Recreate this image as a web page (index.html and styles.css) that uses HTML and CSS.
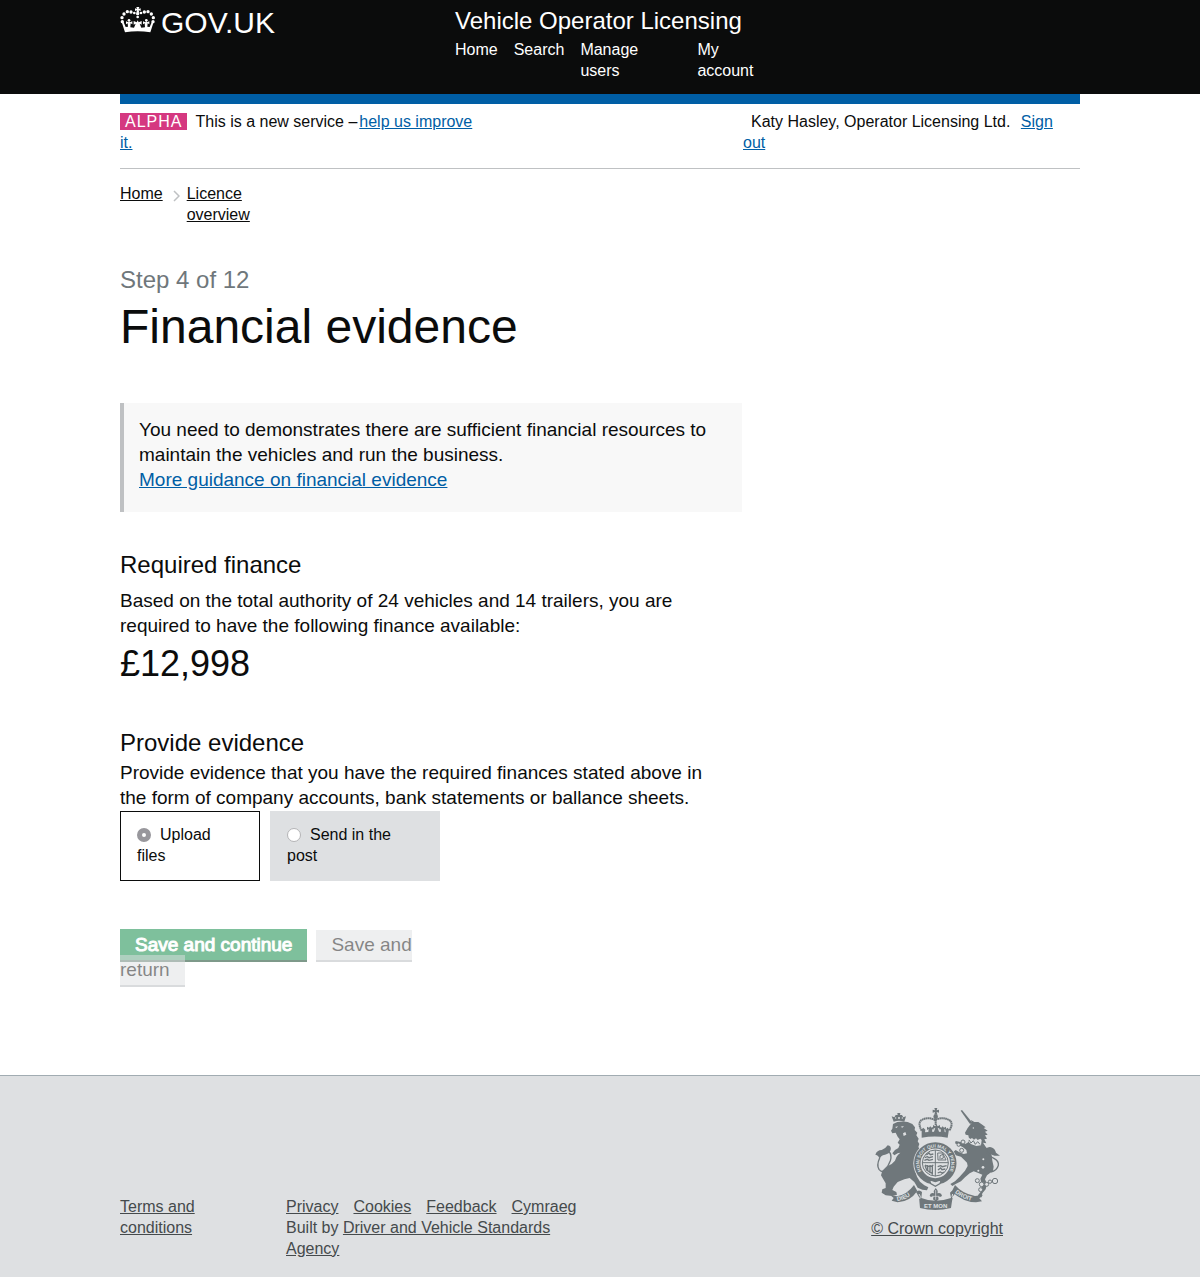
FILE: index.html
```html
<!DOCTYPE html>
<html lang="en">
<head>
<meta charset="utf-8">
<meta name="viewport" content="width=device-width, initial-scale=1">
<title>Financial evidence - Vehicle Operator Licensing</title>
<link rel="stylesheet" href="styles.css">
</head>
<body>
<header class="header">
  <div class="container header-inner">
    <a class="logo" href="#">
      <svg class="logo-crown" viewBox="30 21 105 84" aria-hidden="true">
        <g fill="#fff">
          <path d="M79 24h9l-2 6 6-2v8l-6-2 2 7h-9l2-7-6 2v-8l6 2z"/>
          <circle cx="83" cy="44" r="5"/><circle cx="83" cy="54" r="4"/>
          <circle cx="73" cy="42" r="4"/><circle cx="93" cy="42" r="4"/>
          <circle cx="63" cy="39" r="5"/><circle cx="103" cy="39" r="5"/>
          <circle cx="52" cy="38" r="5"/><circle cx="114" cy="38" r="5"/>
          <circle cx="42" cy="45" r="5"/><circle cx="124" cy="45" r="5"/>
          <circle cx="36" cy="56" r="5"/><circle cx="130" cy="56" r="5"/>
          <circle cx="37" cy="68" r="5"/><circle cx="129" cy="68" r="5"/>
          <circle cx="57" cy="64" r="4"/><circle cx="109" cy="64" r="4"/>
          <path d="M36 72l5-2 6 14 7-1-1-10-5 3v-9l7 3 2-4 3 4 7-3v9l-5-3-1 12 11 1 5-12-6 3v-11l9 4 3-6 3 6 9-4v11l-6-3 5 12 11-1-1-12-5 3v-9l7 3 3-4 2 4 7-3v9l-5-3-1 10 7 1 6-14 5 2-9 28q-38-6-76 0z"/>
        </g>
      </svg>
      <span>GOV.UK</span>
    </a>
    <div class="header-service">
      <a class="service-name" href="#">Vehicle Operator Licensing</a>
      <nav aria-label="Main">
        <ul class="nav">
          <li><a href="#">Home</a></li>
          <li><a href="#">Search</a></li>
          <li class="nav-wide"><a href="#">Manage<br>users</a></li>
          <li><a href="#">My<br>account</a></li>
        </ul>
      </nav>
    </div>
  </div>
</header>

<div class="container">
  <div class="phase-banner">
    <p class="phase-message"><strong class="phase-tag">ALPHA</strong>This is a new service –<a class="phase-link" href="#">help us improve it.</a></p>
    <p class="account"><span class="account-name">Katy Hasley, Operator Licensing Ltd.</span> <a href="#">Sign out</a></p>
  </div>

  <nav aria-label="Breadcrumb">
    <ol class="breadcrumb">
      <li><a href="#">Home</a></li>
      <li>
        <svg class="chevron" viewBox="0 0 7 12" aria-hidden="true"><path d="M1 1l5 5-5 5" fill="none" stroke="#bfc1c3" stroke-width="1.5"/></svg>
        <a href="#">Licence overview</a>
      </li>
    </ol>
  </nav>

  <main class="main">
    <p class="step">Step 4 of 12</p>
    <h1 class="title">Financial evidence</h1>

    <div class="panel">
      <p>You need to demonstrates there are sufficient financial resources to maintain the vehicles and run the business.</p>
      <a href="#">More guidance on financial evidence</a>
    </div>

    <form>
      <section class="section">
        <h2 class="section-title section-title-spaced">Required finance</h2>
        <p class="text">Based on the total authority of 24 vehicles and 14 trailers, you are required to have the following finance available:</p>
        <p class="amount">£12,998</p>
      </section>

      <section class="section">
        <h2 class="section-title">Provide evidence</h2>
        <p class="text">Provide evidence that you have the required finances stated above in the form of company accounts, bank statements or ballance sheets.</p>
        <div class="choices">
          <label class="choice choice-upload"><input type="radio" name="evidence" checked>Upload files</label>
          <label class="choice choice-post"><input type="radio" name="evidence">Send in the post</label>
        </div>
      </section>

      <div class="actions"><button class="button button-primary" type="submit">Save and continue</button><a class="button button-secondary" href="#">Save and return</a></div>
    </form>
  </main>
</div>

<footer class="footer">
  <div class="container footer-inner">
    <div class="footer-terms"><a href="#">Terms and conditions</a></div>
    <div class="footer-meta">
      <ul class="footer-links">
        <li><a href="#">Privacy</a></li>
        <li><a href="#">Cookies</a></li>
        <li><a href="#">Feedback</a></li>
        <li><a href="#">Cymraeg</a></li>
      </ul>
      <p>Built by <a href="#">Driver and Vehicle Standards Agency</a></p>
    </div>
    <a class="copyright" href="#">
      <svg class="crest" viewBox="30 21 375 309" aria-hidden="true">
        <defs>
          <path id="garter" d="M180 227A48 48 0 1 1 242 227"/>
          <path id="dieu" d="M97 303Q130 299 153 270"/>
          <path id="droit" d="M263 273Q297 303 333 303"/>
        </defs>
        <g fill="#6f777b">
          <!-- lion -->
          <path d="M86 65l-6-16 8 3 4-7h6l-1-6h9l-1 6h6l4 7 8-3-5 16q-16-5-32 0z"/>
          <path d="M84 72Q100 62 128 66L142 72 150 82 149 90 157 98 154 106 161 116 158 124 163 132 160 141 166 150 172 165Q158 175 152 190 148 210 156 230L165 245 178 256 190 262 186 271 172 269 158 263 148 246 134 234 118 238 98 246 86 260 82 270 94 276 96 284 82 288 62 286 50 278 52 268 62 264 62 250 54 236 48 226 52 212 64 200 80 192 90 182 94 172Q98 164 106 158L98 160 88 166 82 160 90 150 100 144 104 134 98 128 104 118 98 110 92 98 82 100 78 92 82 86z"/>
          <path d="M31 164Q36 150 50 150 60 148 68 136 80 138 77 150 73 162 60 164 46 166 44 178 42 166 31 164z"/>
          <!-- unicorn -->
          <path d="M287 32l4-2 31 38-7 4z"/>
          <path d="M302 104L300 98 308 84 320 68 318 60 328 66 340 66 352 74 362 82 356 84 368 92 360 95 368 104 360 106 366 116 358 118 364 130 354 128 362 140 372 152 380 166 382 182 386 200 384 212 374 220 366 226 360 238 366 252 362 268 352 280 350 292 338 292 340 284 350 272 350 252 346 236 352 224 338 218 326 214 314 220 300 232 288 244 272 252 262 258 256 252 270 244 284 230 300 212 308 198 306 188 298 180 288 170 272 166 262 158 272 150 282 156 296 162 306 160 304 150 294 142 282 136 270 130 272 123 286 126 300 132 308 128 312 116 310 106z"/>
          <path d="M362 148Q370 138 382 143 390 146 393 158L405 167Q392 169 380 164 366 160 362 148z"/>
          <!-- crown -->
          <path d="M208 24h9l-2 7 7-2v9l-7-2 2 8h-9l2-8-7 2v-9l7 2z"/>
          <circle cx="212" cy="50" r="7"/>
          <path d="M170 88l5-5 6 6-1 8 10-1 1-9-5 3v-10l6 3 4-4 4 4 5-3v10l-4-3 1 9 5-1 4-12-7 4v-12l7 4 3-7 4 7 7-4v12l-7-4 4 12 5 1 1-9-4 3v-10l5 3 4-4 4 4 6-3v10l-5-3 1 9 3 1-1-8 6-6 5 5-4 25q-39-7-78 0z"/>
        </g>
        <g fill="none" stroke="#6f777b">
          <path d="M170 92Q156 66 172 59 190 50 210 60 232 50 250 59 268 66 253 92" stroke-width="6" stroke-dasharray="5 1"/>
          <path d="M212 58v18" stroke-width="6" stroke-dasharray="5 1"/>
          <path d="M44 174Q34 196 42 208 52 220 62 210 70 196 76 182 82 164 70 152" stroke-width="4"/>
          <path d="M377 216Q396 212 400 196 402 184 388 176 372 168 366 156 364 150 368 146" stroke-width="4"/>
          <g stroke-width="3" fill="#dee0e2">
            <circle cx="337" cy="242" r="6"/><circle cx="350" cy="253" r="7"/><circle cx="365" cy="253" r="6"/><circle cx="375" cy="245" r="5"/><circle cx="390" cy="243" r="8"/><circle cx="347" cy="269" r="6"/>
            <circle cx="294" cy="126" r="6"/><circle cx="281" cy="134" r="5"/><circle cx="290" cy="151" r="6"/>
          </g>
        </g>
        <g fill="#dee0e2">
          <circle cx="102" cy="54" r="3"/><circle cx="112" cy="54" r="2"/><circle cx="92" cy="54" r="2"/>
          <path d="M90 81l9-2-4 5zM107 80l10-2-5 5zM114 100l7-4 3 8-8 4z"/>
          <circle cx="354" cy="202" r="4"/><circle cx="340" cy="212" r="3"/><circle cx="355" cy="178" r="3"/><circle cx="325" cy="84" r="2"/>
          <path d="M310 112l6 5 5-3 6 5 6-4 5 5 8-4 4 4-2 16-14 2-15-5-9-8z"/>
        </g>
        <path d="M312 120l6 9 7-7 6 11 7-8 7 8" fill="none" stroke="#6f777b" stroke-width="3"/>
        <!-- garter and shield -->
        <circle cx="211" cy="190" r="66" fill="#dee0e2"/>
        <circle cx="211" cy="190" r="54" fill="none" stroke="#6f777b" stroke-width="19"/>
        <text class="crest-garter" text-anchor="middle"><textPath href="#garter" startOffset="50%">HONI SOIT QUI MAL Y PENSE</textPath></text>
        <circle cx="211" cy="189" r="39" fill="#dee0e2" stroke="#6f777b" stroke-width="3"/>
        <g fill="none" stroke="#6f777b" stroke-width="4">
          <path d="M211 150v79M172 188h78" stroke-width="3"/>
          <path d="M184 165l8-6 4 5 9-2M179 173l8-3 5 3 12-3M178 181l9-3 5 3 12-3M219 210l8-6 4 5 10-2M218 200l9-3 5 3 13-3M218 219l8-3 5 3 7-3"/>
          <path d="M218 159h15l10 21h-24zM225 178v-11l9-4 1 11-7 3" stroke-width="3"/>
          <path d="M180 196l5 14 18 11M188 195v22M195 195v25M202 195v29M180 195q15 8 25 0"/>
        </g>
        <path d="M193 239l18 6 18-6-4 12-14 8-14-8z" fill="#dee0e2" stroke="#6f777b" stroke-width="4"/>
        <!-- motto ribbon -->
        <g fill="#6f777b">
          <path d="M76 286l20 3q30-5 51-34l10 18q-22 32-59 34l-18-5 6-8z"/>
          <path d="M270 255q22 26 60 33l24-3-11 10 8 9-18 3q-38-1-73-32z"/>
          <path d="M153 276q9-9 18 0l-2 18q41 17 89 0l-3-16q10-12 19-2l-10 13q-3 12-6 35-48 12-93 0l-3-33z"/>
          <path d="M212 264q9 9 5 16 12-4 14 7-5 6-12 2l2 9-8 7-9-7 2-9q-8 4-12-2 2-11 13-7-3-8 5-16z"/>
        </g>
        <path d="M212 270v29M201 289h22" stroke="#dee0e2" stroke-width="2"/>
        <path d="M162 282q7 7 2 15M263 282q-4 8 1 12" fill="none" stroke="#dee0e2" stroke-width="3"/>
        <text class="crest-motto"><textPath href="#dieu">DIEU</textPath></text>
        <text class="crest-motto"><textPath href="#droit" startOffset="8">DROIT</textPath></text>
        <text class="crest-motto" x="212" y="323" text-anchor="middle">ET MON</text>
      </svg>
      <span>© Crown copyright</span>
    </a>
  </div>
</footer>
</body>
</html>
```
FILE: styles.css
```css
* { box-sizing: border-box; }

body {
  margin: 0;
  background: #fff;
  color: #0b0c0c;
  font: 16px/21px "Liberation Sans", Arial, sans-serif;
}

h1, h2, p, ul, ol { margin: 0; padding: 0; font-weight: 400; }
ul, ol { list-style: none; }
a { color: #005ea5; }

.container {
  max-width: 960px;
  margin: 0 auto;
}

/* Header */
.header { background: #0b0c0c; }
.header-inner {
  display: grid;
  grid-template-columns: 335px 1fr;
  padding: 6px 0 13px;
}
.header a { color: #fff; text-decoration: none; }
.logo {
  display: flex;
  gap: 6px;
  align-items: flex-start;
  height: 34px;
  font-size: 30px;
  line-height: 34px;
}
.logo-crown { width: 35px; height: 28px; }
.service-name { display: block; font-size: 24px; line-height: 30px; }
.nav { display: flex; gap: 16px; padding-top: 3px; }
.nav-wide { width: 101px; }

/* Phase banner */
.phase-banner {
  display: flex;
  justify-content: space-between;
  border-top: 10px solid #005ea5;
  border-bottom: 1px solid #bfc1c3;
  padding: 7px 0 15px;
}
.phase-message { width: 360px; }
.phase-tag {
  display: inline-block;
  margin-right: 8px;
  padding: 0 5px;
  background: #d53880;
  color: #fff;
  font-weight: 400;
  letter-spacing: 1px;
  line-height: 17px;
}
.phase-link { margin-left: 2px; }
.account { width: 337px; padding-right: 20px; text-indent: 8px; }
.account-name { margin-right: 6px; }

/* Breadcrumb */
.breadcrumb { display: flex; gap: 10px; padding-top: 14px; }
.breadcrumb li { display: flex; gap: 7px; width: min-content; }
.breadcrumb a { color: #0b0c0c; }
.chevron { flex: none; width: 7px; height: 12px; margin-top: 7px; }

/* Content */
.main {
  max-width: 622px;
  padding: 40px 0 93px;
  font-size: 19px;
  line-height: 25px;
}
.step { color: #6f777b; font-size: 24px; line-height: 30px; }
.title { padding-top: 7px; font-size: 48px; line-height: 50px; }
.panel {
  margin: 51px 0 38px;
  padding: 14px 15px 20px;
  border-left: 4px solid #bfc1c3;
  background: #f8f8f8;
}
.section { margin-bottom: 44px; }
.section-title { padding-bottom: 2px; font-size: 24px; line-height: 30px; }
.section-title-spaced { padding-bottom: 8px; }
.text { padding-right: 16px; }
.amount { padding-top: 6px; font-size: 36px; line-height: 40px; }

.choices {
  display: flex;
  gap: 10px;
  padding-top: 1px;
  font-size: 16px;
  line-height: 21px;
}
.choice {
  padding: 12px 24px 14px 16px;
  border: 1px solid #dee0e2;
  background: #dee0e2;
}
.choice:has(:checked) { border-color: #0b0c0c; background: #fff; }
.choice-upload { width: 140px; }
.choice-post { width: 170px; }
.choice input {
  appearance: none;
  width: 14px;
  height: 14px;
  margin: 0 9px 0 0;
  border: 1px solid #b4b4b6;
  border-radius: 50%;
  background: #fff;
  vertical-align: -2px;
}
.choice input:checked { border: 5px solid #98979c; }

.actions { max-width: 300px; padding-top: 7px; }
.button {
  padding: 4px 15px 5px;
  border: 0;
  border-bottom: 2px solid;
  border-radius: 0;
  font: 19px/25px "Liberation Sans", Arial, sans-serif;
  text-decoration: none;
  opacity: 0.5;
}
.button-primary {
  margin: -3px 9px -5px 0;
  padding: 3px 15px;
  border-color: #003618;
  background: #00823b;
  color: #fff;
  -webkit-text-stroke: 1px #fff;
}
.button-secondary { border-color: #b5b9bc; background: #dee0e2; color: #0b0c0c; }

/* Footer */
.footer { border-top: 1px solid #a1acb2; background: #dee0e2; color: #454a4c; }
.footer a { color: #454a4c; }
.footer-inner {
  display: grid;
  grid-template-columns: 166px 1fr auto;
  padding: 31px 77px 18px 0;
}
.footer-terms, .footer-meta { padding-top: 89px; }
.footer-terms a { display: block; width: 100px; }
.footer-meta { max-width: 460px; }
.footer-meta p { max-width: 290px; }
.footer-links { display: flex; gap: 15px; }
.copyright {
  display: flex;
  flex-direction: column;
  align-items: center;
  gap: 8px;
}
.crest { width: 125px; height: 103px; }
.crest-garter, .crest-motto {
  fill: #dee0e2;
  font-weight: 700;
  font-size: 14px;
}
.crest-motto { font-size: 18px; }
```
